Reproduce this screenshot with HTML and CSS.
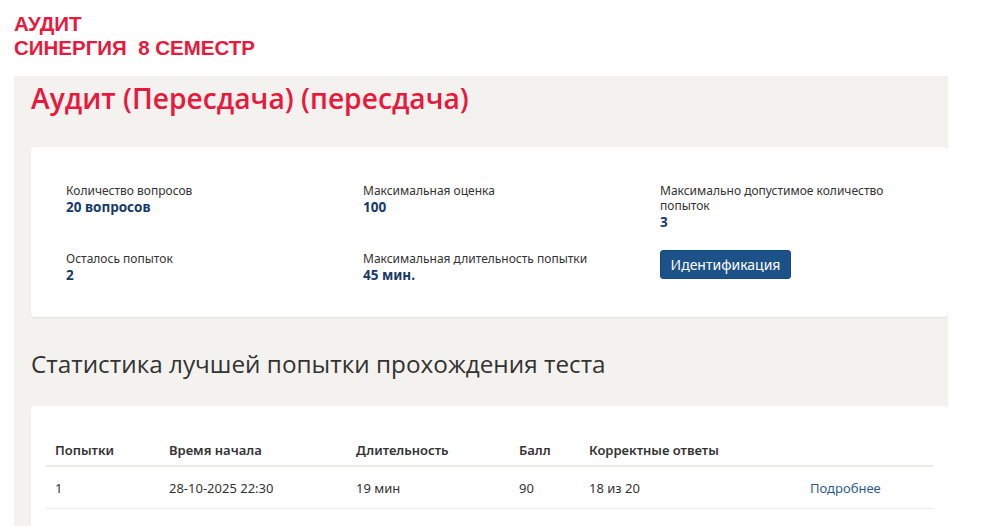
FILE: index.html
```html
<!DOCTYPE html>
<html lang="ru">

<head>
  <meta charset="UTF-8">
  <meta name="viewport" content="width=device-width, initial-scale=1.0">
  <title>Аудит</title>
  <link rel="stylesheet" href="styles.css">
</head>

<body>
  <div class="top">
    <div>АУДИТ</div>
    <div>СИНЕРГИЯ&nbsp; 8 СЕМЕСТР</div>
  </div>

  <div class="panel">
    <h1 class="title">Аудит (Пересдача) (пересдача)</h1>

    <div class="card info">
      <div class="item">
        <div class="label">Количество вопросов</div>
        <div class="value">20 вопросов</div>
      </div>
      <div class="item">
        <div class="label">Максимальная оценка</div>
        <div class="value">100</div>
      </div>
      <div class="item">
        <div class="label">Максимально допустимое количество попыток</div>
        <div class="value">3</div>
      </div>
      <div class="item">
        <div class="label">Осталось попыток</div>
        <div class="value">2</div>
      </div>
      <div class="item">
        <div class="label">Максимальная длительность попытки</div>
        <div class="value">45 мин.</div>
      </div>
      <div class="item">
        <button class="btn">Идентификация</button>
      </div>
    </div>

    <h2 class="subtitle">Статистика лучшей попытки прохождения теста</h2>

    <div class="card stats">
      <table class="tbl">
        <tr>
          <th class="c1">Попытки</th>
          <th class="c2">Время начала</th>
          <th class="c3">Длительность</th>
          <th class="c4">Балл</th>
          <th class="c5">Корректные ответы</th>
          <th></th>
        </tr>
        <tr>
          <td>1</td>
          <td>28-10-2025 22:30</td>
          <td>19 мин</td>
          <td>90</td>
          <td>18 из 20</td>
          <td><a href="#" class="more">Подробнее</a></td>
        </tr>
      </table>
    </div>
  </div>
</body>

</html>
```

FILE: styles.css
```css
body {
  margin: 0;
  font-family: "Noto Sans", "Open Sans", sans-serif;
  color: #333;
  background: #fff;
}

.top {
  padding: 12px 0 0 14px;
  font-family: "Liberation Sans", Arial, sans-serif;
  font-weight: bold;
  font-size: 20.5px;
  line-height: 24px;
  color: #e8193c;
}

.panel {
  margin: 16px 0 0 14px;
  width: 934px;
  height: 450px;
  overflow: hidden;
  background: #f3f2ef;
  padding: 1px 0 0 17px;
  box-sizing: border-box;
}

.title {
  margin: 4px 0 0 0;
  font-family: "Open Sans", sans-serif;
  font-size: 28.2px;
  font-weight: 600;
  line-height: 34px;
  color: #e8193c;
}

.card {
  background: #fff;
  border-radius: 4px;
  box-shadow: 0 1px 2px rgba(0, 0, 0, 0.08);
}

.info {
  margin-top: 32px;
  height: 170px;
  box-sizing: border-box;
  padding: 36px 0 0 35px;
  display: grid;
  grid-template-columns: 297px 297px 240px;
  grid-template-rows: 68px auto;
}

.label {
  font-size: 12px;
  line-height: 15px;
  color: #333;
}

.value {
  margin-top: 2px;
  font-size: 13.5px;
  font-weight: bold;
  line-height: 15px;
  color: #163a6b;
}

.btn {
  margin-top: -1px;
  width: 131px;
  height: 29px;
  border: 1px solid #174a7c;
  border-radius: 3px;
  background: #1c5287;
  color: #fff;
  font-family: "Noto Sans", sans-serif;
  font-size: 14px;
}

.subtitle {
  margin: 30px 0 0 0;
  font-family: "Open Sans", sans-serif;
  font-size: 24.3px;
  font-weight: normal;
  line-height: 34px;
  color: #333;
}

.stats {
  margin-top: 25px;
  height: 120px;
  padding: 28px 15px 0 15px;
}

.tbl {
  width: 887px;
  border-collapse: collapse;
  font-size: 13px;
}

.tbl th {
  text-align: left;
  font-weight: 600;
  height: 31px;
  padding: 0 9px;
  border-bottom: 2px solid #eceae6;
}

.tbl td {
  height: 41px;
  padding: 0 9px;
  border-bottom: 1px solid #eceae6;
}

.c1 {
  width: 96px;
}

.c2 {
  width: 169px;
}

.c3 {
  width: 145px;
}

.c4 {
  width: 52px;
}

.c5 {
  width: 203px;
}

.more {
  color: #2c5d8f;
  text-decoration: none;
}
```
